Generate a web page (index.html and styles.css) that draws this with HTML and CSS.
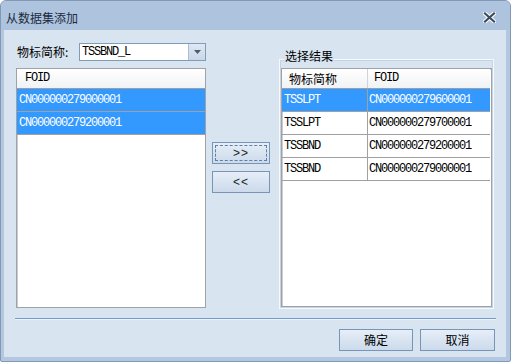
FILE: index.html
```html
<!DOCTYPE html>
<html lang="zh">
<head>
<meta charset="utf-8">
<title>从数据集添加</title>
<link rel="stylesheet" href="styles.css">
</head>
<body>
<div class="window">
  <div class="titlebar">
    <span class="title">从数据集添加</span>
    <span class="close">
      <svg width="13" height="11" viewBox="0 0 13 11">
        <path d="M2 1.5 L11 9.5 M11 1.5 L2 9.5" stroke="#ffffff" stroke-width="4.2" stroke-linecap="square" fill="none"/>
        <path d="M2 1.5 L11 9.5 M11 1.5 L2 9.5" stroke="#3b4b5f" stroke-width="2.2" stroke-linecap="square" fill="none"/>
      </svg>
    </span>
  </div>
  <div class="content">
    <div class="main">
      <div class="left">
        <div class="field">
          <span class="label">物标简称:</span>
          <div class="combo">
            <span class="combo-text mono">TSSBND_L</span>
            <span class="combo-btn">
              <svg width="7" height="4" viewBox="0 0 7 4"><path d="M0 0 H7 L3.5 4 Z" fill="#4d5b6b"/></svg>
            </span>
          </div>
        </div>
        <div class="list">
          <div class="row head"><div class="cell hcell mono">FOID</div></div>
          <div class="row sel"><div class="cell mono">CN000000279000001</div></div>
          <div class="row sel"><div class="cell mono">CN000000279200001</div></div>
        </div>
      </div>
      <div class="middle">
        <button class="btn move focused"><span class="focus-ring">&gt;&gt;</span></button>
        <button class="btn move"><span class="focus-none">&lt;&lt;</span></button>
      </div>
      <div class="group">
        <span class="legend">选择结果</span>
        <div class="list rlist">
          <div class="row head">
            <div class="cell c1 hcell cjk">物标简称</div>
            <div class="cell c2 hcell mono">FOID</div>
          </div>
          <div class="row sel">
            <div class="cell c1 mono">TSSLPT</div>
            <div class="cell c2 mono">CN000000279600001</div>
          </div>
          <div class="row">
            <div class="cell c1 mono">TSSLPT</div>
            <div class="cell c2 mono">CN000000279700001</div>
          </div>
          <div class="row">
            <div class="cell c1 mono">TSSBND</div>
            <div class="cell c2 mono">CN000000279200001</div>
          </div>
          <div class="row">
            <div class="cell c1 mono">TSSBND</div>
            <div class="cell c2 mono">CN000000279000001</div>
          </div>
        </div>
      </div>
    </div>
    <div class="sep"></div>
    <div class="footer">
      <button class="btn action">确定</button>
      <button class="btn action">取消</button>
    </div>
  </div>
</div>
</body>
</html>
```

FILE: styles.css
```css
* { box-sizing: border-box; }
html, body { margin: 0; padding: 0; }
body {
  width: 511px;
  height: 362px;
  overflow: hidden;
  background: #ffffff;
  font-family: "Noto Sans CJK SC", "Liberation Sans", sans-serif;
  font-size: 12px;
  color: #000;
}
.window {
  width: 511px;
  height: 362px;
  background: #b3c7e0;
  border: 1px solid #8299b6;
  border-radius: 6px 6px 2px 2px;
  display: flex;
  flex-direction: column;
}
.titlebar {
  height: 29px;
  background: #adc3de;
  border-radius: 5px 5px 0 0;
  display: flex;
  align-items: center;
  padding: 0 14px 0 5px;
  justify-content: space-between;
}
.title {
  font-size: 12px;
  line-height: 14px;
  color: #1b2b40;
  padding-top: 4px;
}
.close { display: flex; padding-top: 4px; }
.content {
  margin: 0 4px 4px 3px;
  flex: 1;
  background: #d9e4f1;
  display: flex;
  flex-direction: column;
}
.mono {
  font-family: "Liberation Mono", "DejaVu Sans Mono", monospace;
  font-size: 12px;
  letter-spacing: -1.2px;
}
.cjk { font-family: "Noto Sans CJK SC", sans-serif; font-size: 12px; }
.main {
  display: flex;
  align-items: flex-start;
  padding: 13px 0 0 12px;
  height: 279px;
}
.left { width: 190px; display: flex; flex-direction: column; gap: 7px; }
.field { display: flex; align-items: center; height: 18px; }
.label { width: 63px; padding-left: 1px; line-height: 14px; color: #000; }
.combo {
  width: 127px;
  height: 18px;
  background: #fff;
  border: 1px solid #7f9db9;
  display: flex;
  align-items: center;
  justify-content: space-between;
}
.combo-text { padding-left: 2px; line-height: 16px; color: #000; }
.combo-btn {
  width: 17px;
  height: 16px;
  background: linear-gradient(#dfe8f3, #c9d7e9);
  border-left: 1px solid #a9bdd6;
  display: flex;
  align-items: center;
  justify-content: center;
}
.list {
  height: 240px;
  background: #fff;
  border: 1px solid #9fa3a8;
  box-shadow: inset 1px 1px 0 #c9ccd0;
}
.row {
  display: flex;
  height: 23px;
  border-bottom: 1px solid #a0a0a0;
  align-items: center;
}
.row.head {
  height: 20px;
  background: linear-gradient(#ffffff, #f1f2f4);
  border-bottom: 1px solid #9a9ea4;
}
.row.sel { background: #3399ff; color: #fff; }
.cell { padding-left: 2px; line-height: 22px; white-space: nowrap; }
.hcell { padding-left: 8px; line-height: 19px; color: #000; }
.middle {
  width: 58px;
  margin-left: 6px;
  padding-top: 99px;
  display: flex;
  flex-direction: column;
  gap: 7px;
}
.btn {
  font-family: "Noto Sans CJK SC", sans-serif;
  font-size: 12px;
  color: #000;
  border: 1px solid #7894b6;
  background: linear-gradient(#e6eef8, #ccdaeb);
  padding: 0;
  margin: 0;
}
.btn.move {
  height: 22px;
  width: 58px;
  display: flex;
  align-items: stretch;
  padding: 2px;
  font-family: "Liberation Sans", sans-serif;
  font-weight: normal;
  color: #222;
}
.focus-ring, .focus-none {
  flex: 1;
  display: flex;
  align-items: center;
  justify-content: center;
  border: 1px dashed #5f7fa5;
  line-height: 14px;
  letter-spacing: 1px;
}
.focus-none { border-color: transparent; }
.group {
  position: relative;
  margin-left: 9px;
  margin-top: 16px;
  width: 215px;
  height: 250px;
  border: 1px solid #f7f9fc;
  box-shadow: 0 0 0 1px #c6d3e3 inset;
  padding: 8px 1px 1px 1px;
}
.legend {
  position: absolute;
  top: -11px;
  left: 4px;
  padding: 0 1px;
  background: #d9e4f1;
  line-height: 14px;
  color: #000;
}
.rlist { height: 239px; }
.rlist .c1 { width: 86px; border-right: 1px solid #a0a0a0; height: 100%; }
.rlist .c2 { flex: 1; height: 100%; }
.rlist .row { margin-right: 1px; }
.rlist .head .c1 { padding-left: 7px; border-right-color: #d0d3d7; }
.rlist .head .c2 { padding-left: 6px; }
.rlist .c2 { padding-left: 1px; }
.sep {
  margin: 9px 10px 0 11px;
  height: 2px;
  border-top: 1px solid #6f9bd0;
  border-bottom: 1px solid #eef3f9;
}
.footer {
  display: flex;
  justify-content: flex-end;
  gap: 7px;
  padding: 9px 11px 0 0;
}
.btn.action {
  width: 75px;
  height: 22px;
  line-height: 20px;
}
.btn.action:first-child { width: 74px; }
```
